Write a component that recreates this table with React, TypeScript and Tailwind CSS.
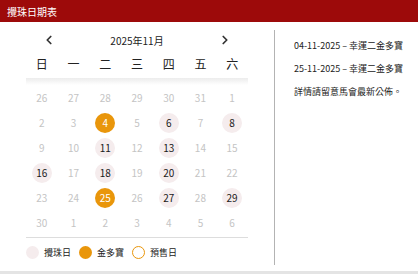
import { ChevronLeft, ChevronRight } from "lucide-react";

type Day = { n: number; muted?: boolean; kind?: "draw" | "jackpot" };

const weekdays = ["日", "一", "二", "三", "四", "五", "六"];

const rows: Day[][] = [
  [
    { n: 26, muted: true },
    { n: 27, muted: true },
    { n: 28, muted: true },
    { n: 29, muted: true },
    { n: 30, muted: true },
    { n: 31, muted: true },
    { n: 1, muted: true },
  ],
  [
    { n: 2, muted: true },
    { n: 3, muted: true },
    { n: 4, kind: "jackpot" },
    { n: 5, muted: true },
    { n: 6, kind: "draw" },
    { n: 7, muted: true },
    { n: 8, kind: "draw" },
  ],
  [
    { n: 9, muted: true },
    { n: 10, muted: true },
    { n: 11, kind: "draw" },
    { n: 12, muted: true },
    { n: 13, kind: "draw" },
    { n: 14, muted: true },
    { n: 15, muted: true },
  ],
  [
    { n: 16, kind: "draw" },
    { n: 17, muted: true },
    { n: 18, kind: "draw" },
    { n: 19, muted: true },
    { n: 20, kind: "draw" },
    { n: 21, muted: true },
    { n: 22, muted: true },
  ],
  [
    { n: 23, muted: true },
    { n: 24, muted: true },
    { n: 25, kind: "jackpot" },
    { n: 26, muted: true },
    { n: 27, kind: "draw" },
    { n: 28, muted: true },
    { n: 29, kind: "draw" },
  ],
  [
    { n: 30, muted: true },
    { n: 1, muted: true },
    { n: 2, muted: true },
    { n: 3, muted: true },
    { n: 4, muted: true },
    { n: 5, muted: true },
    { n: 6, muted: true },
  ],
];

const notes = [
  "04-11-2025 – 幸運二金多寶",
  "25-11-2025 – 幸運二金多寶",
  "詳情請留意馬會最新公佈。",
];

const DayCell = ({ day }: { day: Day }) => {
  let circle = "text-[#c4c4c4]";
  if (day.kind === "draw") circle = "bg-[#f5eced] text-[#1a1a1a]";
  if (day.kind === "jackpot") circle = "bg-[#e9960b] text-white";
  return (
    <div className="flex h-[25px] items-center justify-center">
      <span
        className={`flex h-[20px] w-[20px] items-center justify-center rounded-full text-[10px] ${circle}`}
      >
        {day.n}
      </span>
    </div>
  );
};

export default function App() {
  return (
    <div
      className="h-[274px] w-[418px] bg-[#e4e4e4]"
      style={{ fontFamily: '"Noto Sans CJK TC", "Noto Sans", sans-serif' }}
    >
      <div className="h-[271px] bg-white">
        <div className="flex h-[22px] items-center bg-[#9d0a0a] pl-[7px] text-[10px] text-white">
          攪珠日期表
        </div>

        <div className="flex pt-[8px]">
          <div className="h-[235px] w-[275px] border-r border-[#b3b3b3] px-[26px]">
            <div className="flex h-[20px] items-center justify-between px-[16px] text-[#333]">
              <ChevronLeft size={14} strokeWidth={3} />
              <span className="text-[10px] text-[#222]">2025年11月</span>
              <ChevronRight size={14} strokeWidth={3} />
            </div>

            <div className="grid h-[28px] grid-cols-7 items-center">
              {weekdays.map((w) => (
                <div key={w} className="text-center text-[12px] text-[#222]">
                  {w}
                </div>
              ))}
            </div>

            <div className="h-[7px] bg-gradient-to-b from-[#ececec] to-white" />

            <div className="grid grid-cols-7">
              {rows.flat().map((d, i) => (
                <DayCell key={i} day={d} />
              ))}
            </div>

            <div className="mt-[2px] border-t border-[#dddddd]" />

            <div className="flex h-[29px] items-center text-[9px] text-[#222]">
              <span className="h-[13px] w-[13px] rounded-full bg-[#f5eced]" />
              <span className="ml-[5px]">攪珠日</span>
              <span className="ml-[8px] h-[13px] w-[13px] rounded-full bg-[#e9960b]" />
              <span className="ml-[5px]">金多寶</span>
              <span className="ml-[8px] h-[13px] w-[13px] rounded-full border border-[#e9960b]" />
              <span className="ml-[5px]">預售日</span>
            </div>
          </div>

          <div className="flex flex-col gap-[10px] pl-[19px] pt-[9px] text-[9px] text-[#222]">
            {notes.map((t) => (
              <div key={t} className="leading-[13px]">
                {t}
              </div>
            ))}
          </div>
        </div>
      </div>
    </div>
  );
}
